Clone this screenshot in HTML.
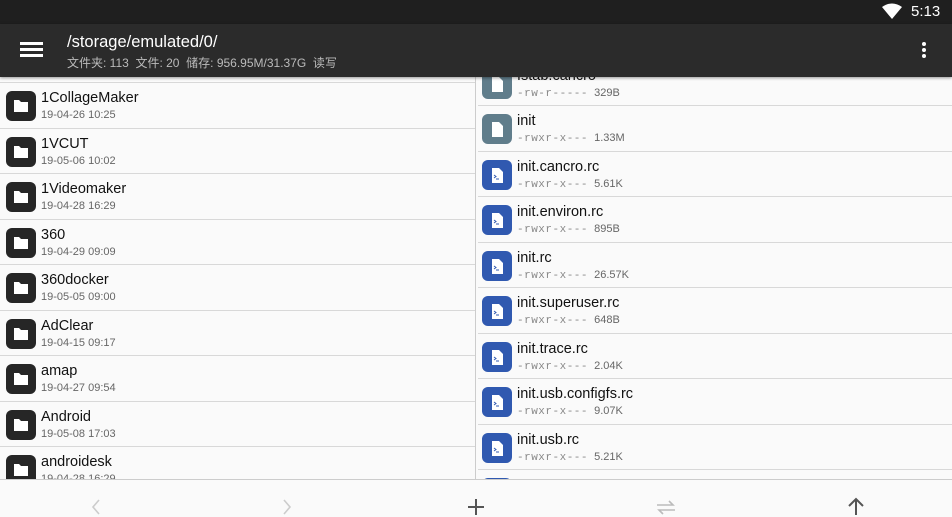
<!DOCTYPE html><html><head><style>
*{margin:0;padding:0;box-sizing:border-box}
body{width:952px;height:516px;overflow:hidden;background:#fafafa;font-family:"Liberation Sans","Noto Sans CJK SC",sans-serif;position:relative}
.sb{position:absolute;left:0;top:0;width:952px;height:24px;background:#1f1f1f}
.tb{position:absolute;left:0;top:24px;width:952px;height:53px;background:#2b2b2b;z-index:5;box-shadow:0 1px 3px rgba(0,0,0,.4)}
.row{position:absolute;height:45.5px;border-bottom:1px solid #d8d8d8;background:#fafafa}
.ic{position:absolute;width:30px;height:30px;border-radius:6px;top:8px}
.n{position:absolute;font-size:14.5px;color:#111;top:7px}
.d{position:absolute;font-size:11px;color:#666;top:26px}
.m{font-family:"Liberation Mono",monospace;color:#888;letter-spacing:0.5px}
.bb{position:absolute;left:0;top:479px;width:952px;height:37px;background:#fafafa;border-top:1px solid #ccc;z-index:6}
</style></head><body>
<div class="sb">
<svg style="position:absolute;left:882px;top:3px" width="20" height="16" viewBox="0 0 20 16"><path d="M0 4 Q10 -3 20 4 L10 16Z" fill="#fff"/></svg>
<div style="position:absolute;left:911px;top:3px;color:#fff;font-size:15px">5:13</div>
</div>
<div class="tb">
<div style="position:absolute;left:20px;top:18px;width:23px;height:2.5px;background:#fff;box-shadow:0 6px 0 #fff,0 12px 0 #fff"></div>
<div style="position:absolute;left:67px;top:9px;color:#fff;font-size:16.5px">/storage/emulated/0/</div>
<div style="position:absolute;left:67px;top:30px;color:#bbb;font-size:12px">文件夹: 113&nbsp; 文件: 20&nbsp; 储存: 956.95M/31.37G&nbsp; 读写</div>
<div style="position:absolute;left:922px;top:18px;width:4px;height:4px;border-radius:2px;background:#fff;box-shadow:0 6px 0 #fff,0 12px 0 #fff"></div>
</div>
<div id="l" style="position:absolute;left:0;top:77px;width:476px;height:403px;border-right:1px solid #ccc;overflow:hidden">
<div style="position:absolute;left:0;top:0;width:476px;height:6px;border-bottom:1px solid #d8d8d8"></div>
</div>
<div style="position:absolute;left:478px;top:77px;width:474px;height:403px;overflow:hidden" id="r"></div>
<div class="bb">
<svg width="952" height="37" style="position:absolute;left:0;top:0" fill="none" stroke-width="1.6">
<path d="M99 20 L93 27 L99 34" stroke="#ccc"/>
<path d="M284 20 L290 27 L284 34" stroke="#ccc"/>
<path d="M476 19 V35 M468 27 H484" stroke="#555" stroke-width="2"/>
<path d="M657 25 H673 L669 21 M675 30 H659 L663 34" stroke="#bbb"/>
<path d="M856 35 V19 M849 26 L856 19 L863 26" stroke="#555" stroke-width="2"/>
</svg>
</div>
<script>
var L=[["1CollageMaker","19-04-26 10:25"],["1VCUT","19-05-06 10:02"],["1Videomaker","19-04-28 16:29"],["360","19-04-29 09:09"],["360docker","19-05-05 09:00"],["AdClear","19-04-15 09:17"],["amap","19-04-27 09:54"],["Android","19-05-08 17:03"],["androidesk","19-04-28 16:29"]];
var fi='<svg width="30" height="30" viewBox="0 0 30 30"><path d="M8 9h5l2 2h7v10H8z" fill="#fff"/></svg>';
var h='';L.forEach(function(r,i){h+='<div class="row" style="left:0;width:476px;top:'+(6+i*45.5)+'px"><div class="ic" style="left:6px;background:#262626">'+fi+'</div><div class="n" style="left:41px">'+r[0]+'</div><div class="d" style="left:41px">'+r[1]+'</div></div>'});
document.getElementById('l').innerHTML+=h;
var R=[["fstab.cancro","-rw-r-----","329B",0],["init","-rwxr-x---","1.33M",0],["init.cancro.rc","-rwxr-x---","5.61K",1],["init.environ.rc","-rwxr-x---","895B",1],["init.rc","-rwxr-x---","26.57K",1],["init.superuser.rc","-rwxr-x---","648B",1],["init.trace.rc","-rwxr-x---","2.04K",1],["init.usb.configfs.rc","-rwxr-x---","9.07K",1],["init.usb.rc","-rwxr-x---","5.21K",1],["x","","",1]];
h='';R.forEach(function(r,i){var s=r[3]?'<svg width="30" height="30" viewBox="0 0 30 30"><path d="M10 8h7l4 4v11H10z" fill="#fff"/><path d="M12 15l2 1.5-2 1.5M14 19h3" stroke="#3059b0" stroke-width="1" fill="none"/></svg>':'<svg width="30" height="30" viewBox="0 0 30 30"><path d="M10 8h7l4 4v11H10z" fill="#fff"/></svg>';
h+='<div class="row" style="left:0;width:474px;top:'+(-16.5+i*45.5)+'px"><div class="ic" style="left:4px;background:'+(r[3]?'#3059b0':'#607d8b')+'">'+s+'</div>'+(r[1]?'<div class="n" style="left:39px">'+r[0]+'</div><div class="d" style="left:39px"><span class="m">'+r[1]+'</span>&nbsp; '+r[2]+'</div>':'')+'</div>'});
document.getElementById('r').innerHTML=h;
</script>
</body></html>
